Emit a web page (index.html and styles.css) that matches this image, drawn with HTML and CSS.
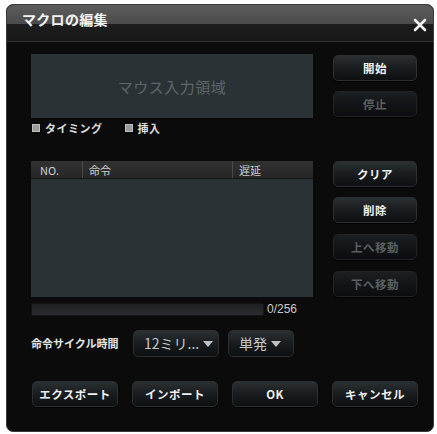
FILE: index.html
```html
<!DOCTYPE html>
<html lang="ja">
<head>
<meta charset="utf-8">
<link rel="stylesheet" href="styles.css">
</head>
<body>
<div class="dialog">
  <div class="titlebar">
    <span class="title">マクロの編集</span>
    <svg class="close" width="14" height="14" viewBox="0 0 14 14"><path d="M2 2 L12 12 M12 2 L2 12" stroke="#f2f2f2" stroke-width="2.6" stroke-linecap="round"/></svg>
  </div>
  <div class="content">
    <div class="top">
      <div class="left">
        <div class="mouse-area">マウス入力領域</div>
        <div class="checks">
          <span class="check"><span class="box"></span>タイミング</span>
          <span class="check"><span class="box"></span>挿入</span>
        </div>
        <div class="table">
          <div class="thead">
            <span class="th th-no">NO.</span>
            <span class="th th-cmd">命令</span>
            <span class="th th-delay">遅延</span>
          </div>
          <div class="tbody"></div>
        </div>
        <div class="progress-row">
          <div class="progress"></div>
          <span class="count">0/256</span>
        </div>
      </div>
      <div class="right">
        <button class="btn">開始</button>
        <button class="btn disabled">停止</button>
        <button class="btn gap-big">クリア</button>
        <button class="btn">削除</button>
        <button class="btn disabled">上へ移動</button>
        <button class="btn disabled">下へ移動</button>
      </div>
    </div>
    <div class="cycle-row">
      <span class="cycle-label">命令サイクル時間</span>
      <div class="dropdown dd1">12ミリ...<span class="arrow"></span></div>
      <div class="dropdown dd2">単発<span class="arrow"></span></div>
    </div>
    <div class="bottom-row">
      <button class="btn wide">エクスポート</button>
      <button class="btn wide">インポート</button>
      <button class="btn wide">OK</button>
      <button class="btn wide">キャンセル</button>
    </div>
  </div>
</div>
</body>
</html>
```

FILE: styles.css
```css
html, body {
  margin: 0;
  padding: 0;
  background: #ffffff;
}
body {
  font-family: "Noto Sans CJK JP", "Liberation Sans", sans-serif;
  width: 437px;
  height: 434px;
  overflow: hidden;
}
.dialog {
  margin: 4px 0 0 6px;
  width: 428px;
  height: 428px;
  box-sizing: border-box;
  background: #0b0b0b;
  border: 1px solid #3a3a3a;
  border-radius: 7px;
  overflow: hidden;
}
.titlebar {
  height: 36px;
  display: flex;
  align-items: center;
  justify-content: space-between;
  padding: 0 6px 0 15px;
  background: linear-gradient(#5c5c5c 0%, #4b4b4b 54%, #1d1d1d 54%, #181818 100%);
  border-bottom: 1px solid #303030;
}
.title {
  color: #f4f4f4;
  font-size: 14px;
  font-weight: bold;
  letter-spacing: 0.3px;
  margin-top: -8px;
}
.close {
  margin-top: 4px;
}
.content {
  padding: 12px 0 0 24px;
}
.top {
  display: flex;
  gap: 20px;
}
.left {
  width: 282px;
  display: flex;
  flex-direction: column;
}
.mouse-area {
  height: 64px;
  background: #2b3235;
  color: #5e6669;
  font-size: 15px;
  display: flex;
  align-items: center;
  justify-content: center;
  letter-spacing: 0.5px;
}
.checks {
  display: flex;
  gap: 22px;
  height: 16px;
  align-items: center;
  margin-top: 2px;
  padding-left: 1px;
}
.check {
  display: flex;
  align-items: center;
  gap: 5px;
  color: #dcdcdc;
  font-size: 11px;
  font-weight: bold;
  letter-spacing: 0.5px;
}
.box {
  width: 8px;
  height: 8px;
  background: #9c9c9c;
  border: 1px solid #bdbdbd;
  box-sizing: border-box;
}
.table {
  margin-top: 25px;
  height: 136px;
  display: flex;
  flex-direction: column;
  background: #2b3235;
}
.thead {
  height: 17px;
  background: linear-gradient(#323232, #262626);
  border-bottom: 1px solid #171717;
  display: flex;
  align-items: center;
  font-size: 11px;
  color: #cfcfcf;
}
.th {
  height: 17px;
  display: flex;
  align-items: center;
  box-sizing: border-box;
}
.th-no {
  width: 52px;
  padding-left: 9px;
  border-right: 1px solid #4a4a4a;
}
.th-cmd {
  width: 150px;
  padding-left: 6px;
  border-right: 1px solid #4a4a4a;
}
.th-delay {
  flex: 1;
  padding-left: 6px;
}
.tbody {
  flex: 1;
}
.progress-row {
  display: flex;
  align-items: center;
  margin-top: 5px;
  height: 14px;
}
.progress {
  width: 231px;
  height: 11px;
  background: linear-gradient(#1f2224, #2a2e30);
  border: 1px solid #151515;
  border-radius: 2px;
}
.count {
  margin-left: 3px;
  color: #c9c9c9;
  font-size: 12px;
  font-family: "Liberation Sans", sans-serif;
}
.right {
  width: 84px;
  display: flex;
  flex-direction: column;
  padding-top: 1px;
}
.btn {
  height: 26px;
  width: 84px;
  margin: 0 0 10px 0;
  padding: 0;
  border: 1px solid #2c3033;
  border-radius: 5px;
  background: linear-gradient(#2b3033 0%, #1a1e20 45%, #0d1011 100%);
  color: #f0f0f0;
  font-family: "Noto Sans CJK JP", "Liberation Sans", sans-serif;
  font-size: 11.5px;
  font-weight: bold;
  letter-spacing: 0.5px;
  box-shadow: 0 1px 0 #000;
}
.btn.disabled {
  color: #5b5f61;
  background: linear-gradient(#1c2022 0%, #121517 50%, #0b0d0e 100%);
  border-color: #202426;
}
.btn.gap-big {
  margin-top: 34px;
}
.right .btn:nth-child(4), .right .btn:nth-child(5) {
  margin-bottom: 11px;
}
.cycle-row {
  display: flex;
  align-items: center;
  margin-top: 13px;
  height: 28px;
}
.cycle-label {
  color: #e4e4e4;
  font-size: 11px;
  font-weight: bold;
  width: 102px;
  letter-spacing: 0;
}
.dropdown {
  height: 27px;
  box-sizing: border-box;
  border: 1px solid #2c3033;
  border-radius: 5px;
  background: linear-gradient(#2b3033 0%, #1a1e20 45%, #0d1011 100%);
  color: #c4c8ca;
  font-size: 14px;
  display: flex;
  align-items: center;
  padding-left: 10px;
}
.dd1 {
  width: 86px;
  margin-right: 9px;
}
.dd2 {
  width: 66px;
}
.arrow {
  width: 0;
  height: 0;
  border-left: 5px solid transparent;
  border-right: 5px solid transparent;
  border-top: 6px solid #bfc3c5;
  margin-left: 4px;
  margin-top: 2px;
}
.bottom-row {
  display: flex;
  gap: 14px;
  margin-top: 24px;
  padding-left: 1px;
}
.btn.wide {
  width: 86px;
  margin: 0;
}
```
